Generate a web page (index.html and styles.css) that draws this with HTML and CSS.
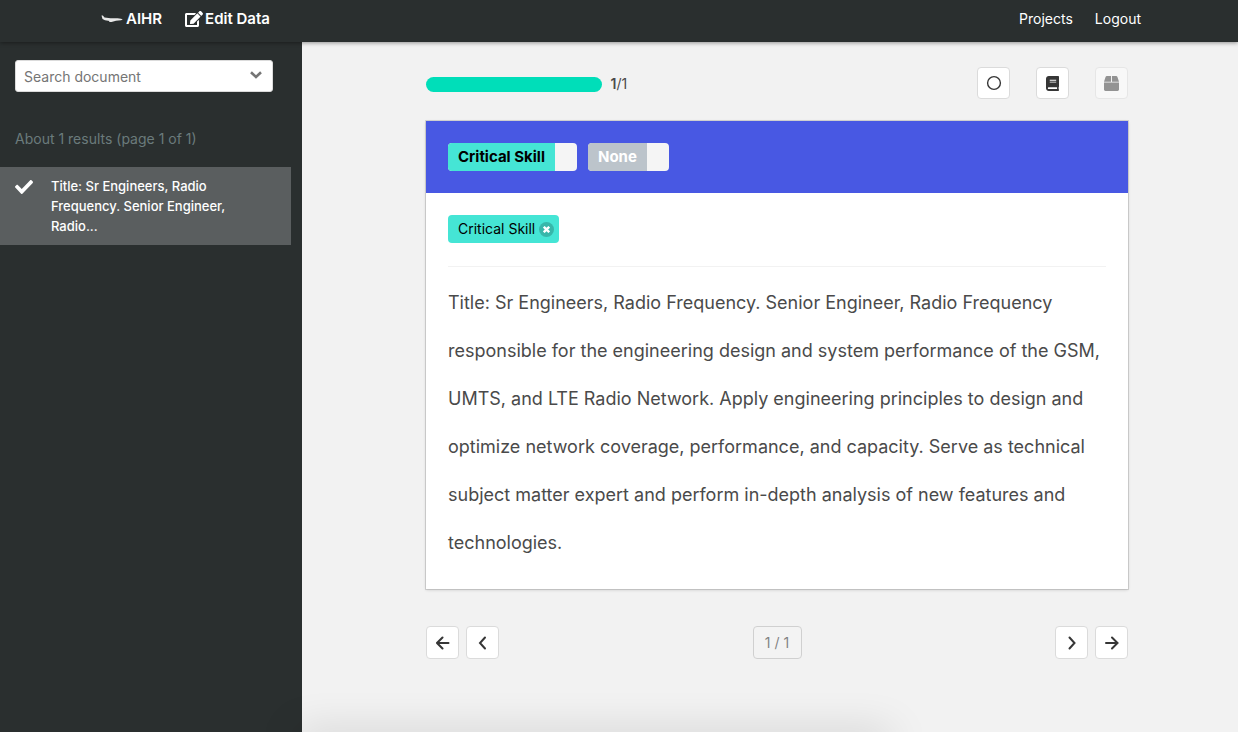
FILE: index.html
```html
<!DOCTYPE html>
<html lang="en">
<head>
<meta charset="utf-8">
<meta name="viewport" content="width=device-width, initial-scale=1">
<title>AIHR</title>
<link rel="stylesheet" href="styles.css">
</head>
<body>
<header class="navbar">
  <nav class="navbar-inner">
    <a class="brand" href="#">
      <svg class="plane" width="22" height="10" viewBox="0 0 22 10" aria-hidden="true"><path fill="#e8e8e8" d="M.5 1.500h1.300L3.500 3.600l6 .6 7 .1 3.500.4 1.800.8-1.800.8-5 .4-4.500 1.200H8L8.500 6.900 4 6.300 1.500 5z"/></svg>
      <span>AIHR</span>
    </a>
    <a class="edit" href="#">
      <svg width="18" height="16" viewBox="0 0 576 512" aria-hidden="true"><path fill="#fff" d="M402.600 83.200l90.200 90.200c3.800 3.800 3.800 10 0 13.800L274.400 405.600l-92.800 10.300c-12.400 1.400-22.900-9.100-21.500-21.500l10.300-92.800L388.800 83.200c3.800-3.800 10-3.800 13.800 0zm162-22.900l-48.800-48.800c-15.200-15.200-39.900-15.200-55.200 0l-35.400 35.400c-3.800 3.800-3.800 10 0 13.800l90.200 90.200c3.800 3.800 10 3.800 13.800 0l35.400-35.400c15.200-15.300 15.200-40 0-55.200zM384 346.200V448H64V128h229.800c3.200 0 6.200-1.300 8.500-3.500l40-40c7.600-7.600 2.200-20.500-8.500-20.500H48C21.500 64 0 85.500 0 112v352c0 26.500 21.500 48 48 48h352c26.500 0 48-21.500 48-48V306.200c0-10.700-12.900-16-20.500-8.500l-40 40c-2.200 2.300-3.500 5.300-3.500 8.500z"/></svg>
      <span>Edit Data</span>
    </a>
    <div class="nav-end">
      <a href="#">Projects</a>
      <a href="#">Logout</a>
    </div>
  </nav>
</header>
<div class="layout">
  <aside class="sidebar">
    <div class="search">
      <input type="text" placeholder="Search document" aria-label="Search document">
      <button type="button" class="search-toggle" aria-label="Filter">
        <svg width="12" height="8" viewBox="0 0 12 8" aria-hidden="true"><path fill="none" stroke="#757575" stroke-width="2.600" d="M1 1.300l5 4.700 5-4.700"/></svg>
      </button>
    </div>
    <p class="results">About 1 results (page 1 of 1)</p>
    <a class="doc" href="#">
      <svg width="18" height="14" viewBox="0 65 512 382" preserveAspectRatio="none" aria-hidden="true"><path fill="#fff" d="M173.900 439.400l-166.400-166.400c-10-10-10-26.200 0-36.200l36.200-36.200c10-10 26.200-10 36.200 0L192 312.700 432.100 72.600c10-10 26.200-10 36.200 0l36.200 36.200c10 10 10 26.200 0 36.200l-294.400 294.400c-10 10-26.200 10-36.200 0z"/></svg>
      <span>Title: Sr Engineers, Radio Frequency. Senior Engineer, Radio...</span>
    </a>
  </aside>
  <main class="main">
    <div class="toolbar">
      <progress class="progress" value="1" max="1" aria-label="Progress"></progress>
      <span class="count"><strong>1</strong>/1</span>
      <div class="tools">
        <button type="button" class="btn" aria-label="Mark">
          <svg width="16" height="16" viewBox="0 0 16 16" aria-hidden="true"><circle cx="8" cy="8" r="6.400" fill="none" stroke="#363636" stroke-width="1.400"/></svg>
        </button>
        <button type="button" class="btn" aria-label="Guideline">
          <svg width="13" height="15" viewBox="0 0 448 512" aria-hidden="true"><path fill="#363636" d="M448 360V24c0-13.300-10.700-24-24-24H96C43 0 0 43 0 96v320c0 53 43 96 96 96h328c13.300 0 24-10.700 24-24v-16c0-7.500-3.500-14.300-8.900-18.700-4.200-15.400-4.200-59.300 0-74.700 5.400-4.300 8.900-11.100 8.900-18.600zM128 134c0-3.300 2.700-6 6-6h212c3.300 0 6 2.700 6 6v20c0 3.300-2.700 6-6 6H134c-3.300 0-6-2.700-6-6v-20zm0 64c0-3.300 2.700-6 6-6h212c3.300 0 6 2.700 6 6v20c0 3.300-2.700 6-6 6H134c-3.300 0-6-2.700-6-6v-20zm253.400 250H96c-17.700 0-32-14.300-32-32 0-17.600 14.400-32 32-32h285.400c-1.900 17.100-1.900 46.900 0 64z"/></svg>
        </button>
        <button type="button" class="btn" disabled aria-label="Metadata">
          <svg width="15" height="15" viewBox="0 0 512 512" aria-hidden="true"><path fill="#363636" d="M509.500 184.600L458.900 32.800C452.400 13.200 434.100 0 413.400 0H272v192h238.700c-.4-2.500-.4-5-1.200-7.400zM240 0H98.600c-20.700 0-39 13.200-45.500 32.800L2.500 184.600c-.8 2.400-.8 4.900-1.200 7.400H240V0zM0 224v240c0 26.500 21.500 48 48 48h416c26.500 0 48-21.500 48-48V224H0z"/></svg>
        </button>
      </div>
    </div>
    <section class="card">
      <div class="labels">
        <button type="button" class="label"><span class="label-name teal">Critical Skill</span><kbd></kbd></button>
        <button type="button" class="label"><span class="label-name gray">None</span><kbd></kbd></button>
      </div>
      <div class="card-body">
        <div class="tags">
          <span class="tag">Critical Skill
            <button type="button" class="remove" aria-label="Remove Critical Skill"><svg width="7" height="7" viewBox="0 0 7 7" aria-hidden="true"><path stroke="#fff" stroke-width="2.400" d="M.8.800l5.400 5.400M6.200.8L.8 6.200"/></svg></button>
          </span>
        </div>
        <hr>
        <p class="text">Title: Sr Engineers, Radio Frequency. Senior Engineer, Radio Frequency responsible for the engineering design and system performance of the GSM, UMTS, and LTE Radio Network. Apply engineering principles to design and optimize network coverage, performance, and capacity. Serve as technical subject matter expert and perform in-depth analysis of new features and technologies.</p>
      </div>
    </section>
    <div class="pager">
      <div class="pager-group">
        <button type="button" class="btn" aria-label="First"><svg width="14" height="14" viewBox="0 0 14 14" aria-hidden="true"><path d="M6.500 1.500L1 7l5.500 5.500M1 7h11.500"/></svg></button>
        <button type="button" class="btn" aria-label="Previous"><svg width="14" height="14" viewBox="0 0 14 14" aria-hidden="true"><path d="M9 1.500L4 7l5 5.500"/></svg></button>
      </div>
      <button type="button" class="btn page" disabled>1 / 1</button>
      <div class="pager-group">
        <button type="button" class="btn" aria-label="Next"><svg width="14" height="14" viewBox="0 0 14 14" aria-hidden="true"><path d="M4.500 1.500L9.500 7l-5 5.500"/></svg></button>
        <button type="button" class="btn" aria-label="Last"><svg width="14" height="14" viewBox="0 0 14 14" aria-hidden="true"><path d="M7 1.500L12.500 7 7 12.500M12.500 7H1"/></svg></button>
      </div>
    </div>
  </main>
</div>
<div class="status-shadow"></div>
</body>
</html>
```
FILE: styles.css
```css
* { box-sizing: border-box; }
body {
  margin: 0;
  min-height: 100vh;
  display: flex;
  flex-direction: column;
  background: #f2f2f2;
  color: #4a4a4a;
  font: 14px/20px Inter, "Liberation Sans", sans-serif;
}
button, input { font: inherit; }
a { color: inherit; text-decoration: none; }
svg { display: block; flex: none; }

.navbar {
  position: relative;
  height: 42px;
  background: #2a2f2f;
  color: #fff;
  box-shadow: 0 1px 4px rgba(0, 0, 0, .4);
}
.navbar-inner {
  max-width: 1064px;
  height: 38px;
  margin: 0 auto;
  padding: 0 10px 0 14px;
  display: flex;
  align-items: center;
}
.brand, .edit { display: flex; align-items: center; font-size: 15px; font-weight: 600; }
.brand { gap: 3px; margin-right: 23px; }
.edit { gap: 2px; }
.nav-end { margin-left: auto; display: flex; gap: 22px; }

.layout { flex: 1; display: flex; }
.sidebar {
  width: 302px;
  flex: none;
  padding-top: 18px;
  background: #2a2f2f;
}
.search { position: relative; margin: 0 29px 0 15px; }
.search input {
  display: block;
  width: 100%;
  height: 32px;
  padding: 0 36px 0 8px;
  border: 1px solid #dbdbdb;
  border-radius: 3px;
  background: #fff;
}
.search input::placeholder { color: #757575; opacity: 1; }
.search-toggle {
  position: absolute;
  top: 0;
  right: 11px;
  height: 30px;
  padding: 0;
  border: 0;
  background: none;
}
.results { margin: 37px 15px 18px; color: #6b7b7c; }
.doc {
  display: flex;
  align-items: flex-start;
  gap: 18px;
  margin-right: 11px;
  padding: 9px 52px 9px 15px;
  background: #5a5e5f;
  color: #fff;
  font-size: 13px;
  font-weight: 500;
}
.doc svg { margin-top: 4px; }

.main { flex: 1; min-width: 0; padding: 25px 110px 40px 124px; }
.toolbar { display: flex; align-items: center; margin-bottom: 22px; }
.progress {
  appearance: none;
  width: 25%;
  height: 15px;
  margin-top: 2px;
  border: 0;
  border-radius: 8px;
  overflow: hidden;
  background: #dbdbdb;
}
.progress::-webkit-progress-bar { background: #dbdbdb; }
.progress::-webkit-progress-value { background: #00deb9; }
.count { margin: 2px 0 0 9px; }
.count strong { font-weight: 600; }
.tools { display: flex; gap: 26px; margin-left: auto; }
.btn {
  display: flex;
  align-items: center;
  justify-content: center;
  width: 33px;
  height: 33px;
  padding: 0;
  border: 1px solid #dbdbdb;
  border-radius: 4px;
  background: #fff;
  color: #363636;
}
.tools .btn { height: 32px; }
.btn:disabled { opacity: .5; }

.card {
  background: #fff;
  box-shadow: 0 1px 3px rgba(10, 10, 10, .16), 0 0 0 1px rgba(10, 10, 10, .12);
}
.labels { display: flex; gap: 11px; padding: 22px; background: #4858e3; }
.label {
  display: flex;
  padding: 0;
  border: 0;
  border-radius: 4px;
  overflow: hidden;
  font-size: 15px;
  font-weight: 700;
  line-height: 28px;
  background: #f5f5f5;
}
.label-name { padding: 0 10px; }
.teal { background: #45e5d5; color: #000; }
.gray { background: #bcc4cb; color: #fff; }
.label kbd { width: 22px; }
.card-body { padding: 22px; }
.tags { display: flex; }
.tag {
  display: flex;
  align-items: center;
  gap: 4px;
  height: 28px;
  padding: 0 5px 0 10px;
  border-radius: 4px;
  background: #45e5d5;
  color: #000;
}
.remove {
  display: flex;
  align-items: center;
  justify-content: center;
  width: 15px;
  height: 15px;
  padding: 0;
  border: 0;
  border-radius: 50%;
  background: #37b7aa;
}
hr { height: 1px; margin: 23px 0 12px; border: 0; background: #f2f2f2; }
.text { margin: 0; font-size: 18px; line-height: 48px; }

.pager { display: flex; justify-content: space-between; margin-top: 37px; }
.pager-group { display: flex; gap: 7px; }
.pager path { fill: none; stroke: #363636; stroke-width: 2; stroke-linecap: round; }
.page { width: 49px; }
.page:disabled { background: #f5f5f5; border-color: #bbb; opacity: .6; }

.status-shadow {
  position: fixed;
  bottom: -20px;
  left: 24%;
  width: 48%;
  height: 20px;
  box-shadow: 0 0 40px rgba(0, 0, 0, .17);
  pointer-events: none;
}
```
